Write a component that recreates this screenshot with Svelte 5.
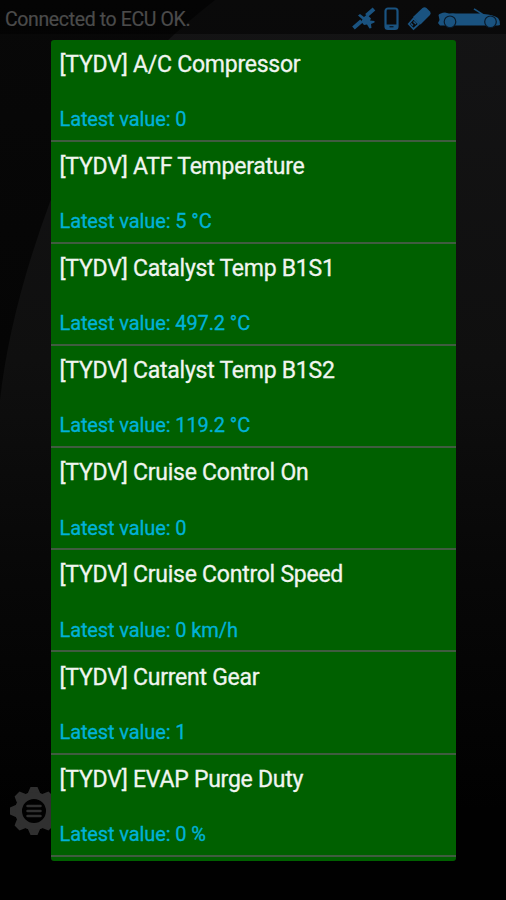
<script>
  const readings = [
    ['A/C Compressor', '0'],
    ['ATF Temperature', '5 °C'],
    ['Catalyst Temp B1S1', '497.2 °C'],
    ['Catalyst Temp B1S2', '119.2 °C'],
    ['Cruise Control On', '0'],
    ['Cruise Control Speed', '0 km/h'],
    ['Current Gear', '1'],
    ['EVAP Purge Duty', '0 %'],
  ];
</script>

<div class="screen">
  <svg class="backdrop" viewBox="0 0 506 900" aria-hidden="true">
    <defs>
      <linearGradient id="fade" x1="0" y1="0" x2="0" y2="1">
        <stop offset="0" stop-color="#141415" />
        <stop offset="0.4" stop-color="#0f0f0f" />
        <stop offset="0.65" stop-color="#070707" />
        <stop offset="0.9" stop-color="#010101" />
      </linearGradient>
      <linearGradient id="side" x1="0" y1="0" x2="0" y2="1">
        <stop offset="0" stop-color="#080808" />
        <stop offset="0.9" stop-color="#010101" />
      </linearGradient>
    </defs>
    <rect width="506" height="900" fill="url(#side)" />
    <path d="M506 0H215Q100 90 50 202Q10 310 0 400V900H506Z" fill="url(#fade)" />
  </svg>

  <header>
    <span class="status">Connected to ECU OK.</span>
    <svg class="icons" width="156" height="34" viewBox="350 0 156 34" fill="#1a5380" aria-hidden="true">
      <path d="M353.5 28L361.5 21M366.5 15.5L374 9" stroke="#1a5380" stroke-width="4" />
      <path d="M358 15.5L360 14L364 17L367 14.500L371 18.500L370 20.500L374.500 21L374.500 22.500L371 24L371.500 28L369.500 28.500L367 24.500L364 25L361 21.500L362.500 19.500Z" />
      <rect x="385.5" y="8.5" width="12" height="20.5" rx="2.5" fill="none" stroke="#1a5380" stroke-width="2.2" />
      <path d="M386 24.5H397V29H386Z" />
      <path d="M389.5 26.8H393.5" stroke="#080808" stroke-width="1" />
      <path d="M413 17L422.5 8Q424.5 6.500 426.500 8L430 11.500Q431.500 13 430 15L420.500 24.500Z" />
      <path d="M413.5 18.5L419 24L413.5 29L408.800 24Z" fill="none" stroke="#1a5380" stroke-width="1.8" />
      <path d="M411 23.500L413 25.500M413.500 21.500L416 24" stroke="#1a5380" stroke-width="1.5" />
      <path d="M438.5 15Q440 13 445 12.500L449 13.500Q453 13 456 13.500H480L473.5 9.5L474.5 8.2L483.5 14Q493 14.5 498 18Q500.5 21 500 25L498 25.500H440L438 23L439.5 20Z" />
      <g stroke="#0a1a28" stroke-width="1.2">
        <circle cx="450" cy="21.8" r="5.8" /><circle cx="490.5" cy="21.8" r="5.8" />
      </g>
    </svg>
  </header>

  <svg class="gear" width="50" height="50" viewBox="-25 -25 50 50" aria-hidden="true">
    <g fill="#303030">
      {#each [0, 45, 90, 135, 180, 225, 270, 315] as angle}
        <path d="M-7 -16L-3.5 -24H3.5L7 -16Z" transform="rotate({angle})" />
      {/each}
    </g>
    <circle r="15.5" fill="none" stroke="#303030" stroke-width="7" />
    <path d="M-6.5 -5H6.5M-6.5 0H6.5M-6.5 5H6.5" stroke="#303030" stroke-width="2.5" stroke-linecap="round" />
  </svg>

  <main>
    {#each readings as [name, value]}
      <section>
        <h2>[TYDV] {name}</h2>
        <p>Latest value: {value}</p>
      </section>
    {/each}
  </main>
</div>

<style>
  :global(body) { margin: 0; background: #000; }
  .screen {
    position: relative;
    width: 506px;
    height: 900px;
    overflow: hidden;
    font-family: Roboto, "Liberation Sans", sans-serif;
  }
  .backdrop { position: absolute; inset: 0; }
  header {
    position: relative;
    display: flex;
    justify-content: space-between;
    height: 34px;
    background: rgba(0, 0, 0, 0.5);
  }
  .status {
    padding-left: 5px;
    font-size: 19.5px;
    line-height: 39px;
    letter-spacing: -0.37px;
    color: #4b4b4b;
    -webkit-text-stroke: 0.2px;
    white-space: nowrap;
  }
  .gear { position: absolute; left: 9px; top: 786px; }
  main {
    position: relative;
    box-sizing: border-box;
    width: 405px;
    height: 821px;
    margin: 6px 0 0 51px;
    overflow: hidden;
    border-radius: 3px;
    background: #006000;
  }
  section {
    box-sizing: border-box;
    height: 102.2px;
    padding: 10.2px 8.5px 0;
    border-bottom: 2px solid #405c40;
  }
  section:first-child { margin-top: -0.7px; }
  h2, p {
    margin: 0;
    font-weight: 400;
    white-space: nowrap;
    -webkit-text-stroke: 0.3px;
  }
  h2 { font-size: 23px; line-height: 30px; letter-spacing: -0.25px; color: #f0f5f0; }
  p { margin-top: 26.3px; font-size: 20px; line-height: 26px; letter-spacing: -0.11px; color: #00b2d8; }
</style>
